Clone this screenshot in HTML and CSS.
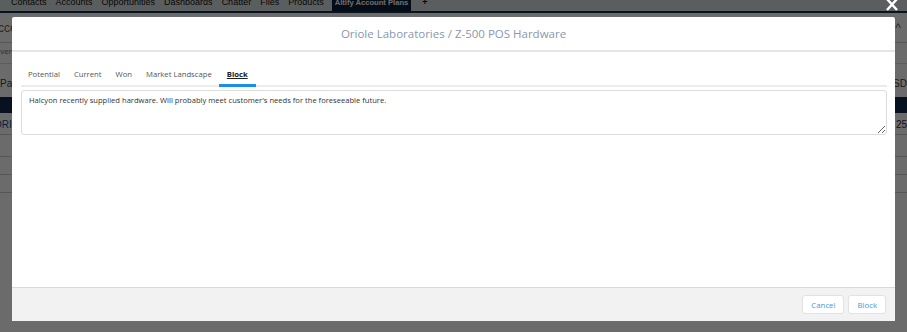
FILE: index.html
```html
<!DOCTYPE html>
<html lang="en">
<head>
  <meta charset="UTF-8">
  <title>Block - Oriole Laboratories</title>
  <link rel="stylesheet" href="styles.css">
</head>
<body>

<div class="page">
  <div class="nav">
    <span class="nav-tab">Contacts</span>
    <span class="nav-tab">Accounts</span>
    <span class="nav-tab">Opportunities</span>
    <span class="nav-tab">Dashboards</span>
    <span class="nav-tab">Chatter</span>
    <span class="nav-tab">Files</span>
    <span class="nav-tab">Products</span>
    <span class="nav-tab active">Altify Account Plans</span>
    <span class="nav-tab plus">+</span>
  </div>

  <div class="crumb">
    <span>Account Plan</span>
    <span class="caret">^</span>
  </div>
  <div class="sub">Overview</div>
  <div class="panel-row">
    <span>Panel</span>
    <span>USD</span>
  </div>
  <div class="grid-head"></div>
  <div class="grid-row">
    <span class="link">ORIOLE</span>
    <span>25</span>
  </div>
  <div class="grid-row empty"></div>
  <div class="grid-row small"><span>O</span></div>
  <div class="grid-row small"></div>
</div>

<div class="overlay"></div>

<button class="close" aria-label="Close">
  <svg width="14" height="12" viewBox="0 0 14 12">
    <path d="M2 0 L12 11 M12 0 L2 11" stroke="#fff" stroke-width="2.4" fill="none"/>
  </svg>
</button>

<div class="modal">
  <div class="modal-header">
    <h2>Oriole Laboratories / Z-500 POS Hardware</h2>
  </div>

  <div class="modal-body">
    <div class="tabs">
      <span class="tab">Potential</span>
      <span class="tab">Current</span>
      <span class="tab">Won</span>
      <span class="tab">Market Landscape</span>
      <span class="tab selected">Block</span>
    </div>
    <textarea class="note">Halcyon recently supplied hardware. Will probably meet customer's needs for the foreseeable future.</textarea>
  </div>

  <div class="modal-footer">
    <button class="btn">Cancel</button>
    <button class="btn">Block</button>
  </div>
</div>

</body>
</html>
```

FILE: styles.css
```css
* {
  box-sizing: border-box;
}

body {
  margin: 0;
  font-family: 'Liberation Sans', Arial, sans-serif;
  background: #fff;
  width: 907px;
  height: 332px;
  overflow: hidden;
}

/* page behind the modal */

.page {
  color: #333;
  font-size: 9px;
}

.nav {
  display: flex;
  align-items: flex-start;
  height: 13px;
  padding-left: 11px;
  background: #d8e0e0;
  border-bottom: 2px solid #14304e;
  font-size: 9px;
  line-height: 11px;
  overflow: hidden;
}

.nav-tab {
  padding: 0 9px 0 0;
  color: #111;
  margin-top: -3px;
}

.nav-tab.active {
  background: #0b2038;
  color: #fff;
  font-weight: bold;
  font-size: 7.6px;
  height: 15px;
  padding: 0 3px;
  margin-left: -1px;
  margin-right: 11px;
}

.nav-tab.plus {
  font-weight: bold;
}

.crumb {
  display: flex;
  justify-content: space-between;
  height: 30px;
  padding: 8px 6px 0 0;
  margin-left: -10px;
  border-bottom: 1px solid #ccc;
  font-size: 12px;
  color: #666;
}

.sub {
  height: 20px;
  padding-top: 4px;
  margin-left: -6px;
  font-size: 8px;
  color: #777;
}

.panel-row {
  display: flex;
  justify-content: space-between;
  height: 34px;
  padding-top: 14px;
  border-top: 1px solid #ddd;
  font-size: 10px;
  color: #444;
}

.grid-head {
  height: 16px;
  background: #14294a;
}

.grid-row {
  display: flex;
  justify-content: space-between;
  height: 22px;
  padding-top: 6px;
  margin-left: -6px;
  border-bottom: 1px solid #ccc;
  font-size: 10px;
}

.grid-row .link {
  color: #1a4f8a;
}

.grid-row.empty {
  height: 22px;
}

.grid-row.small {
  height: 18px;
  padding-left: 22px;
}

.overlay {
  position: fixed;
  inset: 0;
  background: rgba(0, 0, 0, 0.58);
}

.close {
  position: fixed;
  top: -1px;
  left: 885px;
  padding: 0;
  border: none;
  background: none;
}

/* modal */

.modal {
  position: fixed;
  top: 17px;
  left: 12px;
  width: 883px;
  height: 304px;
  display: flex;
  flex-direction: column;
  background: #fff;
  border-radius: 2px;
  font-family: 'Open Sans', sans-serif;
}

.modal-header {
  height: 35px;
  border-bottom: 2px solid #e6e6e6;
  display: flex;
  align-items: center;
  justify-content: center;
}

.modal-header h2 {
  margin: 0;
  font-size: 11.5px;
  font-weight: 400;
  color: #8898b0;
}

.modal-body {
  flex: 1;
  padding: 14px 8px 0 9px;
}

.tabs {
  display: flex;
  border-bottom: 2px solid #ececec;
  height: 21px;
}

.tab {
  padding: 3px 7px 0;
  font-size: 7.7px;
  color: #555;
}

.tab.selected {
  color: #222;
  font-weight: 700;
  text-decoration: underline;
  border-bottom: 3px solid #1b8ee8;
  margin-bottom: -2px;
  padding: 3px 8px 0;
}

.note {
  display: block;
  width: 100%;
  height: 45px;
  margin-top: 3px;
  padding: 4px 7px;
  border: 1px solid #dcdcdc;
  border-radius: 3px;
  font-family: 'Open Sans', sans-serif;
  font-size: 7.6px;
  color: #333;
  resize: vertical;
}

.modal-footer {
  height: 34px;
  background: #f2f2f2;
  border-top: 1px solid #d9d9d9;
  display: flex;
  justify-content: flex-end;
  align-items: center;
  gap: 4px;
  padding-right: 9px;
}

.btn {
  height: 19px;
  padding: 0 8px;
  background: #fff;
  border: 1px solid #e2e2e2;
  border-radius: 3px;
  font-family: 'Open Sans', sans-serif;
  font-size: 7.8px;
  color: #4a94dc;
  cursor: pointer;
}
```
